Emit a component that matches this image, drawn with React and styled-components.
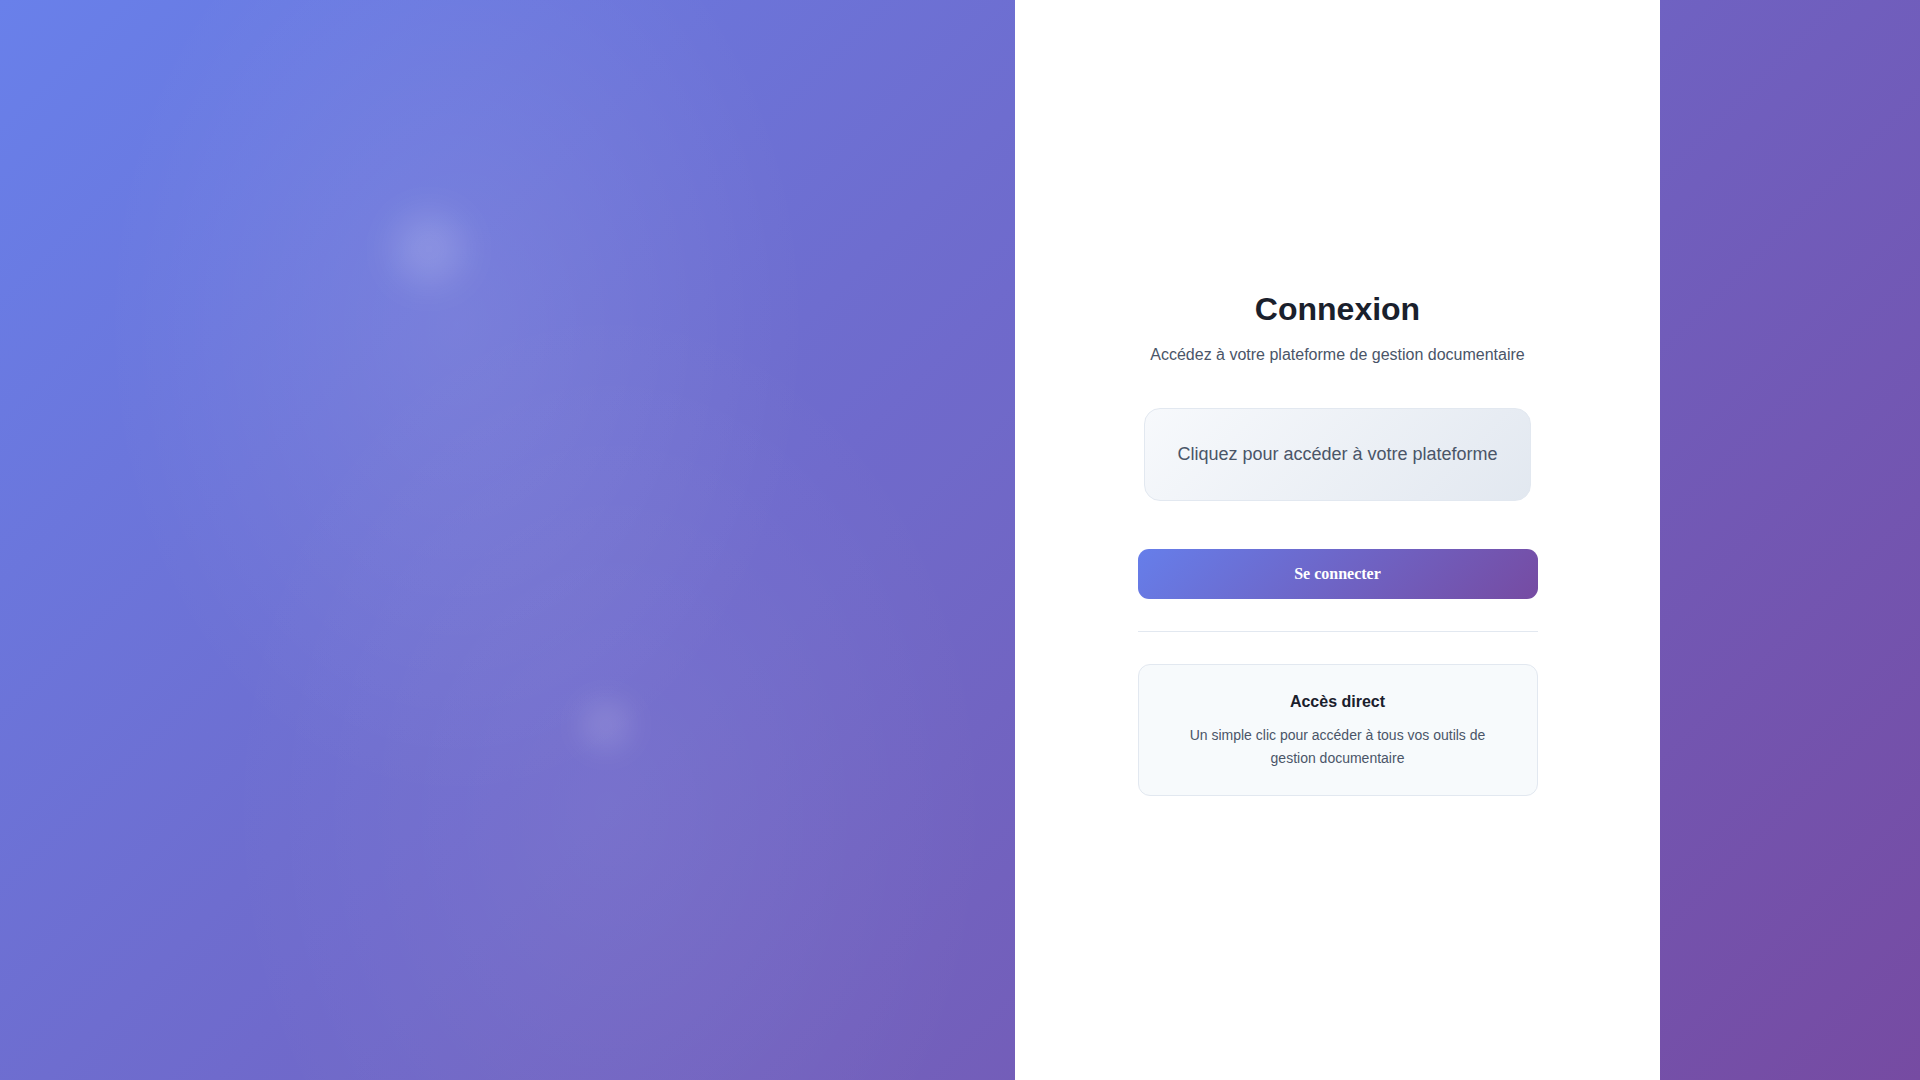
import React from "react";
import styled, { createGlobalStyle } from "styled-components";

const GlobalStyle = createGlobalStyle`
  *, *::before, *::after { box-sizing: border-box; }
  html, body { margin: 0; padding: 0; }
  body {
    font-family: "Liberation Sans", Arial, sans-serif;
    background: linear-gradient(135deg, #667eea 0%, #764ba2 100%);
    min-height: 100vh;
  }
`;

const Layout = styled.div`
  display: grid;
  grid-template-columns: 1015px 645px 1fr;
  height: 100vh;
  overflow: hidden;
`;

const Hero = styled.div`
  position: relative;
  overflow: hidden;
  background:
    radial-gradient(ellipse at 45% 30%, rgba(255, 255, 255, 0.09) 0%, rgba(255, 255, 255, 0) 45%),
    radial-gradient(ellipse at 60% 75%, rgba(255, 255, 255, 0.06) 0%, rgba(255, 255, 255, 0) 45%),
    rgba(255, 255, 255, 0.02);
`;

const Orb = styled.span`
  position: absolute;
  border-radius: 50%;
  background: rgba(255, 255, 255, ${(p) => p.$alpha});
  filter: blur(${(p) => p.$blur}px);
  width: ${(p) => p.$size}px;
  height: ${(p) => p.$size}px;
  left: ${(p) => p.$x}px;
  top: ${(p) => p.$y}px;
`;

const FormPanel = styled.main`
  background: #ffffff;
  display: flex;
  align-items: center;
  justify-content: center;
  padding-top: 6px;
`;

const FormBox = styled.div`
  width: 400px;
  display: flex;
  flex-direction: column;
  align-items: center;
  text-align: center;
`;

const Title = styled.h1`
  margin: 0 0 15px;
  font-size: 32px;
  line-height: 1.2;
  font-weight: 700;
  color: #1a202c;
`;

const Subtitle = styled.p`
  margin: 0 0 41px;
  font-size: 16px;
  line-height: 1.5;
  color: #4a5568;
`;

const AccessHint = styled.div`
  padding: 32px;
  border: 1px solid #e2e8f0;
  border-radius: 16px;
  background: linear-gradient(135deg, #f7f9fc 0%, #e2e8f0 100%);
  color: #4a5568;
  font-size: 18px;
  line-height: 1.5;
  margin-bottom: 48px;
`;

const LoginButton = styled.button`
  width: 100%;
  height: 50px;
  border: none;
  border-radius: 11px;
  background: linear-gradient(135deg, #667eea 0%, #764ba2 100%);
  color: #ffffff;
  font-family: "Liberation Serif", "Times New Roman", serif;
  font-weight: 700;
  font-size: 16px;
  cursor: pointer;
`;

const Divider = styled.hr`
  width: 100%;
  margin: 32px 0;
  border: none;
  border-top: 1px solid #e2e8f0;
`;

const InfoCard = styled.section`
  width: 100%;
  padding: 25px 32px 26px;
  background: #f7fafc;
  border: 1px solid #e2e8f0;
  border-radius: 12px;
`;

const InfoTitle = styled.h3`
  margin: 0 0 10px;
  font-size: 16px;
  line-height: 1.5;
  font-weight: 700;
  color: #1a202c;
`;

const InfoText = styled.p`
  margin: 0;
  font-size: 14px;
  line-height: 1.6;
  color: #4a5568;
`;

export default function App() {
  return (
    <>
      <GlobalStyle />
      <Layout>
        <Hero>
          <Orb $x={394} $y={214} $size={70} $blur={18} $alpha={0.16} />
          <Orb $x={580} $y={699} $size={52} $blur={14} $alpha={0.12} />
        </Hero>
        <FormPanel>
          <FormBox>
            <Title>Connexion</Title>
            <Subtitle>Accédez à votre plateforme de gestion documentaire</Subtitle>
            <AccessHint>Cliquez pour accéder à votre plateforme</AccessHint>
            <LoginButton type="button">Se connecter</LoginButton>
            <Divider />
            <InfoCard>
              <InfoTitle>Accès direct</InfoTitle>
              <InfoText>
                Un simple clic pour accéder à tous vos outils de gestion documentaire
              </InfoText>
            </InfoCard>
          </FormBox>
        </FormPanel>
        <div />
      </Layout>
    </>
  );
}
